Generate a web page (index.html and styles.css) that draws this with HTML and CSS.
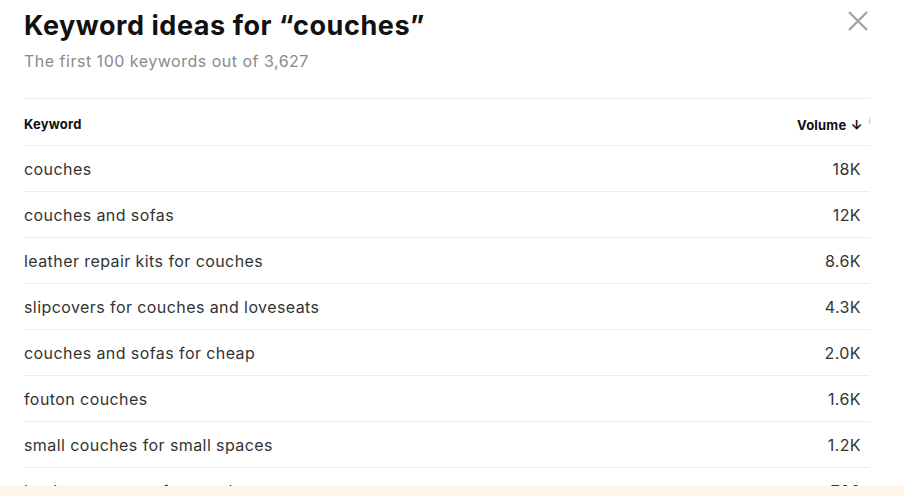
FILE: index.html
```html
<!DOCTYPE html>
<html lang="en">
<head>
<meta charset="utf-8">
<title>Keyword ideas</title>
<link rel="stylesheet" href="styles.css">
</head>
<body>
<div class="modal">
  <header class="modal-head">
    <div class="titles">
      <h1 class="title">Keyword ideas for “couches”</h1>
      <p class="subtitle">The first 100 keywords out of 3,627</p>
    </div>
    <button class="close" aria-label="Close">
      <svg width="22" height="22" viewBox="0 0 22 22"><path d="M2 2L20 20M20 2L2 20" stroke="#a3a3a3" stroke-width="2.4" fill="none"/></svg>
    </button>
  </header>
  <table class="table">
    <thead>
      <tr>
        <th class="col-kw">Keyword</th>
        <th class="col-vol">Volume <span class="arrow">↓</span><span class="info">i</span></th>
      </tr>
    </thead>
    <tbody>
      <tr><td>couches</td><td class="num">18K</td></tr>
      <tr><td>couches and sofas</td><td class="num">12K</td></tr>
      <tr><td>leather repair kits for couches</td><td class="num">8.6K</td></tr>
      <tr><td>slipcovers for couches and loveseats</td><td class="num">4.3K</td></tr>
      <tr><td>couches and sofas for cheap</td><td class="num">2.0K</td></tr>
      <tr><td>fouton couches</td><td class="num">1.6K</td></tr>
      <tr><td>small couches for small spaces</td><td class="num">1.2K</td></tr>
      <tr><td>leather protector for couches</td><td class="num">700</td></tr>
    </tbody>
  </table>
</div>
<div class="footer-band"></div>
</body>
</html>
```
FILE: styles.css
```css
* { box-sizing: border-box; }
html, body { margin: 0; padding: 0; background: #fff; overflow: hidden; }
body { font-family: "Inter", "Noto Sans", sans-serif; color: #222; }

.modal { padding: 0 34px 0 24px; }

.modal-head {
  display: flex;
  justify-content: space-between;
  align-items: flex-start;
  padding-top: 10px;
  height: 99px;
  border-bottom: 1px solid #ececec;
}
.title {
  margin: 0;
  font-size: 27px;
  line-height: 32px;
  font-weight: 700;
  color: #111;
  letter-spacing: 0.55px;
}
.subtitle {
  margin: 8px 0 0;
  font-size: 16px;
  line-height: 22px;
  color: #8a8a8a;
  letter-spacing: 0.5px;
}
.close {
  border: 0;
  background: none;
  padding: 0;
  margin: 0 1px 0 0;
  cursor: pointer;
  width: 22px;
  height: 22px;
  display: block;
}
.close svg { display: block; }

.table { width: 100%; border-collapse: collapse; }
.table th {
  height: 46px;
  font-size: 13px;
  font-weight: 700;
  color: #111;
  text-align: left;
  padding: 4px 0 0;
  border-bottom: 1px solid #ececec;
  letter-spacing: 0.2px;
}
.table th.col-vol { text-align: right; white-space: nowrap; }
.arrow { font-size: 13px; font-weight: 700; margin-left: 1px; }
.info { font-size: 9px; color: #aaa; font-weight: 400; vertical-align: 6px; margin-left: 6px; margin-right: -1px; }
.table td {
  height: 46px;
  padding: 2px 0 0;
  font-size: 16px;
  color: #333;
  border-bottom: 1px solid #ececec;
  letter-spacing: 0.42px;
}
.table td.num { text-align: right; padding-right: 9px; }

.footer-band {
  position: fixed;
  left: 0; right: 0; bottom: 0;
  height: 10px;
  background: #fdf4ea;
}
```
